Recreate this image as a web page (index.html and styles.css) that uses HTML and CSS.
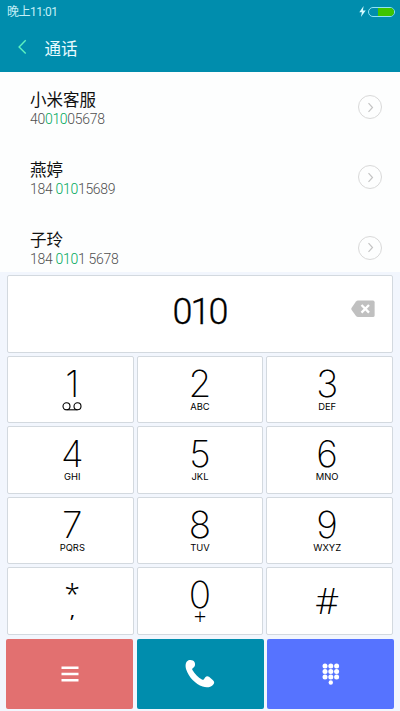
FILE: index.html
```html
<!DOCTYPE html>
<html lang="zh-CN">
<head>
<meta charset="utf-8">
<title>通话</title>
<link rel="stylesheet" href="styles.css">
</head>
<body>
<header class="header">
  <div class="status">
    <span class="clock">晚上11:01</span>
    <div class="power">
      <svg class="bolt" width="7" height="11" viewBox="0 0 7 11"><path d="M4.6 0 0.3 6.3h2.6L1.9 11 6.7 4.4H3.9z" fill="#d6fbff"/></svg>
      <div class="battery"><div class="charge"></div></div>
    </div>
  </div>
  <div class="nav">
    <svg class="back" width="10" height="16" viewBox="0 0 10 16"><path d="M8.7 1.3 2.1 8l6.6 6.4" fill="none" stroke="#5df2c0" stroke-width="1.4"/></svg>
    <h1 class="title">通话</h1>
  </div>
</header>
<main>
  <ul class="contacts">
    <li class="contact">
      <div><div class="name">小米客服</div><div class="number">40<b>010</b>05678</div></div>
      <span class="more"><svg width="7" height="11" viewBox="0 0 7 11"><path d="m1.5 1.2 4 4.3-4 4.3" /></svg></span>
    </li>
    <li class="contact">
      <div><div class="name">燕婷</div><div class="number">184 <b>010</b>15689</div></div>
      <span class="more"><svg width="7" height="11" viewBox="0 0 7 11"><path d="m1.5 1.2 4 4.3-4 4.3" /></svg></span>
    </li>
    <li class="contact">
      <div><div class="name">子玲</div><div class="number">184 <b>010</b>1 5678</div></div>
      <span class="more"><svg width="7" height="11" viewBox="0 0 7 11"><path d="m1.5 1.2 4 4.3-4 4.3" /></svg></span>
    </li>
  </ul>
  <section class="dialer">
    <div class="display">
      <span></span>
      <span class="typed">010</span>
      <svg class="erase" width="24" height="18" viewBox="0 0 24 18"><path d="M7 .6h15q1.6 0 1.6 1.6v13.2q0 1.6-1.6 1.6H7Q5.800 17 5 16L.5 9.700q-.5-.9 0-1.700L5 1.600Q5.800.6 7 .6z" fill="#c0c0c0"/><path d="m10.500 5 7.500 7.600m0-7.600-7.500 7.600" stroke="#fff" stroke-width="2.300"/></svg>
    </div>
    <div class="keys">
      <div class="key"><span class="digit">1</span><svg class="voicemail" width="20" height="9" viewBox="0 0 20 9"><g fill="none" stroke="#000" stroke-width="1.1"><circle cx="4.500" cy="4.300" r="3.500"/><circle cx="15.500" cy="4.300" r="3.500"/><path d="M4.500 7.800h11"/></g></svg></div>
      <div class="key"><span class="digit">2</span><span class="letters">ABC</span></div>
      <div class="key"><span class="digit">3</span><span class="letters">DEF</span></div>
      <div class="key"><span class="digit">4</span><span class="letters">GHI</span></div>
      <div class="key"><span class="digit">5</span><span class="letters">JKL</span></div>
      <div class="key"><span class="digit">6</span><span class="letters">MNO</span></div>
      <div class="key"><span class="digit">7</span><span class="letters">PQRS</span></div>
      <div class="key"><span class="digit">8</span><span class="letters">TUV</span></div>
      <div class="key"><span class="digit">9</span><span class="letters">WXYZ</span></div>
      <div class="key"><span class="star">*</span><span class="comma">,</span></div>
      <div class="key"><span class="digit">0</span><span class="plus">+</span></div>
      <div class="key"><span class="hash">#</span></div>
    </div>
    <div class="actions">
      <div class="action menu"><svg width="18" height="16" viewBox="0 0 18 16"><path d="M.5 1.700h17M.5 8h17M.5 14.300h17" stroke="#fff" stroke-width="2.500"/></svg></div>
      <div class="action call"><svg width="30" height="30" viewBox="0 0 30 30"><path d="M3.500 1.300C5.500.5 8.700 1 9.600 3.200c.8 1.900.6 3.800-.7 5l-1.200 1c-.7.6-.6 1.300-.1 2.100 2.300 3.700 5.500 7.100 9.300 9.200.8.4 1.500.3 2-.3l1.400-2c1-1.300 2.500-1.400 3.700-.4l4 3.400c1.700 1.500 1.500 3-.1 4.700-2.300 2.600-6.300 3.100-10.300 1.700C10.500 25 3.700 18.300 1.200 10.500.1 6.900.4 2.800 3.500 1.300z" fill="#fff"/></svg></div>
      <div class="action pad"><svg width="18" height="22" viewBox="0 0 18 22"><g fill="#fff"><circle cx="3" cy="3" r="2.500"/><circle cx="8.800" cy="3" r="2.500"/><circle cx="14.600" cy="3" r="2.500"/><circle cx="3" cy="8.500" r="2.500"/><circle cx="8.800" cy="8.500" r="2.500"/><circle cx="14.600" cy="8.500" r="2.500"/><circle cx="3" cy="14" r="2.500"/><circle cx="8.800" cy="14" r="2.500"/><circle cx="14.600" cy="14" r="2.500"/><circle cx="8.800" cy="19.500" r="2.200"/></g></svg></div>
    </div>
  </section>
</main>
</body>
</html>
```
FILE: styles.css
```css
* { box-sizing: border-box; }
body {
  margin: 0;
  width: 400px;
  height: 711px;
  overflow: hidden;
  background: #fdfefe;
  font-family: "Noto Sans", "Noto Sans CJK SC", sans-serif;
  color: #000;
}
svg { display: block; }
.header { height: 72px; background: #008dad; }
.status {
  height: 23px;
  padding: 0 5px 0 7px;
  display: flex;
  align-items: center;
  justify-content: space-between;
}
.clock {
  font-family: Roboto, "Noto Sans CJK SC", sans-serif;
  font-size: 12px;
  line-height: 23px;
  font-weight: 400;
  letter-spacing: -.5px;
  padding-top: 2px;
  color: #c4f0f7;
}
.power { display: flex; align-items: center; gap: 2px; }
.battery {
  width: 27px;
  height: 10px;
  border: 1px solid #8fe3f5;
  border-radius: 5px;
  display: flex;
  justify-content: flex-end;
  overflow: hidden;
}
.charge { width: 16px; background: #3fc400; }
.nav { height: 49px; padding-left: 17px; display: flex; align-items: center; }
.back { margin-top: -1px; }
.title {
  margin: 0 0 0 17.500px;
  font: 400 16.500px/24px "Noto Sans CJK SC", sans-serif;
  color: #e9fbff;
}
.contacts { height: 200px; margin: 0; padding: 0; list-style: none; overflow: hidden; }
.contact {
  height: 70.300px;
  padding: 0 18px 0 30px;
  display: flex;
  align-items: center;
  justify-content: space-between;
}
.name { font: 400 16.500px/21px "Noto Sans CJK SC", sans-serif; color: #111; padding-top: 3px; }
.number {
  font: 300 14px/19px Roboto, sans-serif;
  letter-spacing: -.3px;
  color: #505050;
}
.number b { font-weight: 300; color: #00a85c; }
.more {
  width: 24px;
  height: 24px;
  border: 1px solid #d9d9d9;
  border-radius: 50%;
  display: grid;
  place-items: center;
}
.more path { fill: none; stroke: #c4c4c4; stroke-width: 1.2; }
.dialer { height: 439px; padding: 3px 7px 0; background: #f2f6fd; }
.display, .key { background: #fff; border: 1px solid #d3d9df; border-radius: 2px; }
.display {
  height: 78px;
  padding: 0 17px 0 16px;
  display: grid;
  grid-template-columns: 1fr auto 1fr;
  align-items: center;
}
.typed {
  font: 300 36px/40px Roboto, sans-serif;
  letter-spacing: -2px;
  margin: -5px 0 0 0;
  -webkit-text-stroke: .3px #000;
}
.erase { justify-self: end; margin-top: -10px; }
.keys {
  margin-top: 3px;
  height: 278.500px;
  display: grid;
  grid-template-columns: repeat(3, 1fr);
  grid-template-rows: repeat(4, 1fr);
  gap: 3px;
}
.key { display: flex; flex-direction: column; align-items: center; padding-top: 10px; }
.key:nth-child(3n) { padding-right: 5px; }
.key:nth-child(3n + 1) { padding-left: 4px; }
.digit { font: 200 37px/34px Inter, sans-serif; }
.letters { font: 400 9.400px/11px Inter, sans-serif; }
.voicemail { margin-top: 1px; }
.star { font: 300 28px/30px "Noto Sans", sans-serif; }
.comma { font: 400 20px/14px "Noto Sans", sans-serif; margin-top: -5px; }
.plus { font: 300 22px/8px "Noto Sans", sans-serif; }
.hash { font: 350 37px/44px "Open Sans", sans-serif; }
.actions {
  margin: 4.500px -1px 0;
  height: 70px;
  display: grid;
  grid-template-columns: repeat(3, 1fr);
  gap: 3.500px;
}
.action { border-radius: 2px; display: grid; place-items: center; }
.menu { background: #e27070; }
.call { background: #008dad; }
.pad { background: #5673ff; }
```
